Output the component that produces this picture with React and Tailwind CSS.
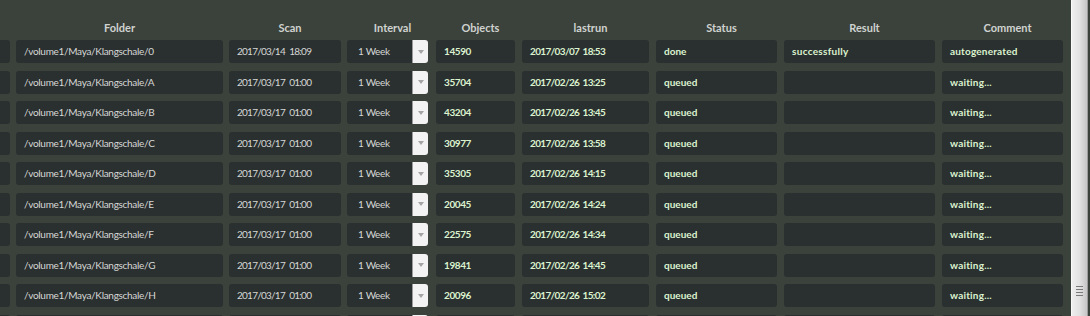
import React from 'react';

const rows = [
    { folder: '/volume1/Maya/Klangschale/0', scan: '2017/03/14 18:09', objects: '14590', lastrun: '2017/03/07 18:53', status: 'done', result: 'successfully', comment: 'autogenerated' },
    { folder: '/volume1/Maya/Klangschale/A', scan: '2017/03/17 01:00', objects: '35704', lastrun: '2017/02/26 13:25', status: 'queued', result: '', comment: 'waiting...' },
    { folder: '/volume1/Maya/Klangschale/B', scan: '2017/03/17 01:00', objects: '43204', lastrun: '2017/02/26 13:45', status: 'queued', result: '', comment: 'waiting...' },
    { folder: '/volume1/Maya/Klangschale/C', scan: '2017/03/17 01:00', objects: '30977', lastrun: '2017/02/26 13:58', status: 'queued', result: '', comment: 'waiting...' },
    { folder: '/volume1/Maya/Klangschale/D', scan: '2017/03/17 01:00', objects: '35305', lastrun: '2017/02/26 14:15', status: 'queued', result: '', comment: 'waiting...' },
    { folder: '/volume1/Maya/Klangschale/E', scan: '2017/03/17 01:00', objects: '20045', lastrun: '2017/02/26 14:24', status: 'queued', result: '', comment: 'waiting...' },
    { folder: '/volume1/Maya/Klangschale/F', scan: '2017/03/17 01:00', objects: '22575', lastrun: '2017/02/26 14:34', status: 'queued', result: '', comment: 'waiting...' },
    { folder: '/volume1/Maya/Klangschale/G', scan: '2017/03/17 01:00', objects: '19841', lastrun: '2017/02/26 14:45', status: 'queued', result: '', comment: 'waiting...' },
    { folder: '/volume1/Maya/Klangschale/H', scan: '2017/03/17 01:00', objects: '20096', lastrun: '2017/02/26 15:02', status: 'queued', result: '', comment: 'waiting...' },
    // next row is only peeking in at the bottom edge
    { folder: '', scan: '', objects: '', lastrun: '', status: '', result: '', comment: '', week: false },
];

const cell = 'h-[23px] rounded-[3px] bg-[#2a2f2f] flex items-center pl-2 overflow-hidden whitespace-nowrap';
const plain = 'text-[10px] text-[#d6d8d6]';
const green = 'text-[10px] font-bold text-[#dcf3cf]';

function IntervalSelect({ label }) {
    return (
        <div className="ml-[6px] w-[81px] h-[23px] flex">
            <div className="flex-1 rounded-l-[3px] bg-[#2a2f2f] flex items-center pl-[11px] text-[10px] text-[#d6d8d6] tracking-[-0.3px]">{label}</div>
            <div className="w-[16px] h-[23px] rounded-r-[3px] bg-[#f3f3f3] border-l border-[#9a9a9a] flex items-center justify-center">
                <svg width="6" height="4" viewBox="0 0 6 4"><path d="M0 0h6L3 4z" fill="#a4a4a4" /></svg>
            </div>
        </div>
    );
}

function Row({ r }) {
    return (
        <div className="flex h-[23px]">
            <div className="w-[10px] h-[23px] rounded-r-[3px] bg-[#2a2f2f]" />
            <div className={`ml-[6px] w-[207px] ${cell} ${plain} tracking-[-0.3px]`}>{r.folder}</div>
            <div className={`ml-[6px] w-[112px] ${cell} ${plain} tracking-[-0.75px] [word-spacing:2.5px]`}>{r.scan}</div>
            <IntervalSelect label={r.week === false ? '' : '1 Week'} />
            <div className={`ml-[8px] w-[79px] ${cell} ${green} tracking-[-0.4px]`}>{r.objects}</div>
            <div className={`ml-[7px] w-[127px] ${cell} ${green} tracking-[-0.65px] [word-spacing:1.5px]`}>{r.lastrun}</div>
            <div className={`ml-[7px] w-[121px] ${cell} ${green}`}>{r.status}</div>
            <div className={`ml-[7px] w-[151px] ${cell} ${green} tracking-[0.3px]`}>{r.result}</div>
            <div className={`ml-[7px] w-[121px] ${cell} ${green} tracking-[0.2px]`}>{r.comment}</div>
        </div>
    );
}

export default function App() {
    return (
        <div className="w-[1090px] h-[316px] overflow-hidden bg-[#3b423b] flex" style={{ fontFamily: 'Lato, "Open Sans", sans-serif' }}>
            <div className="w-[1071px] overflow-hidden pt-[18px]">
                {/* header */}
                <div className="flex h-[20px] items-center text-[11px] font-bold text-[#d0d3d0]">
                    <div className="w-[10px]" />
                    <div className="ml-[6px] w-[207px] text-center">Folder</div>
                    <div className="ml-[6px] w-[112px] text-center pl-[10px]">Scan</div>
                    <div className="ml-[6px] w-[81px] text-center pl-[10px]">Interval</div>
                    <div className="ml-[8px] w-[79px] text-center pl-[10px]">Objects</div>
                    <div className="ml-[7px] w-[127px] text-center pl-[10px]">lastrun</div>
                    <div className="ml-[7px] w-[121px] text-center pl-[10px]">Status</div>
                    <div className="ml-[7px] w-[151px] text-center pl-[10px]">Result</div>
                    <div className="ml-[7px] w-[121px] text-center pl-[10px]">Comment</div>
                </div>
                <div className="mt-[2px] flex flex-col gap-y-[7.5px]">
                    {rows.map((r, i) => <Row key={i} r={r} />)}
                </div>
            </div>
            {/* scrollbar */}
            <div className="w-[17px] h-[316px] border-l border-[#fafafa] bg-gradient-to-r from-[#eeeeee] via-[#e2e2e2] to-[#c6c6c6] border-r border-r-[#9c9c9c] flex flex-col justify-end items-center pb-[20px]">
                <div className="flex flex-col gap-[2px] w-[7px]">
                    <div className="h-px bg-[#7a7a7a]" />
                    <div className="h-px bg-[#7a7a7a]" />
                    <div className="h-px bg-[#7a7a7a]" />
                    <div className="h-px bg-[#7a7a7a]" />
                </div>
            </div>
            <div className="flex-1 bg-[#3b423b]" />
        </div>
    );
}
